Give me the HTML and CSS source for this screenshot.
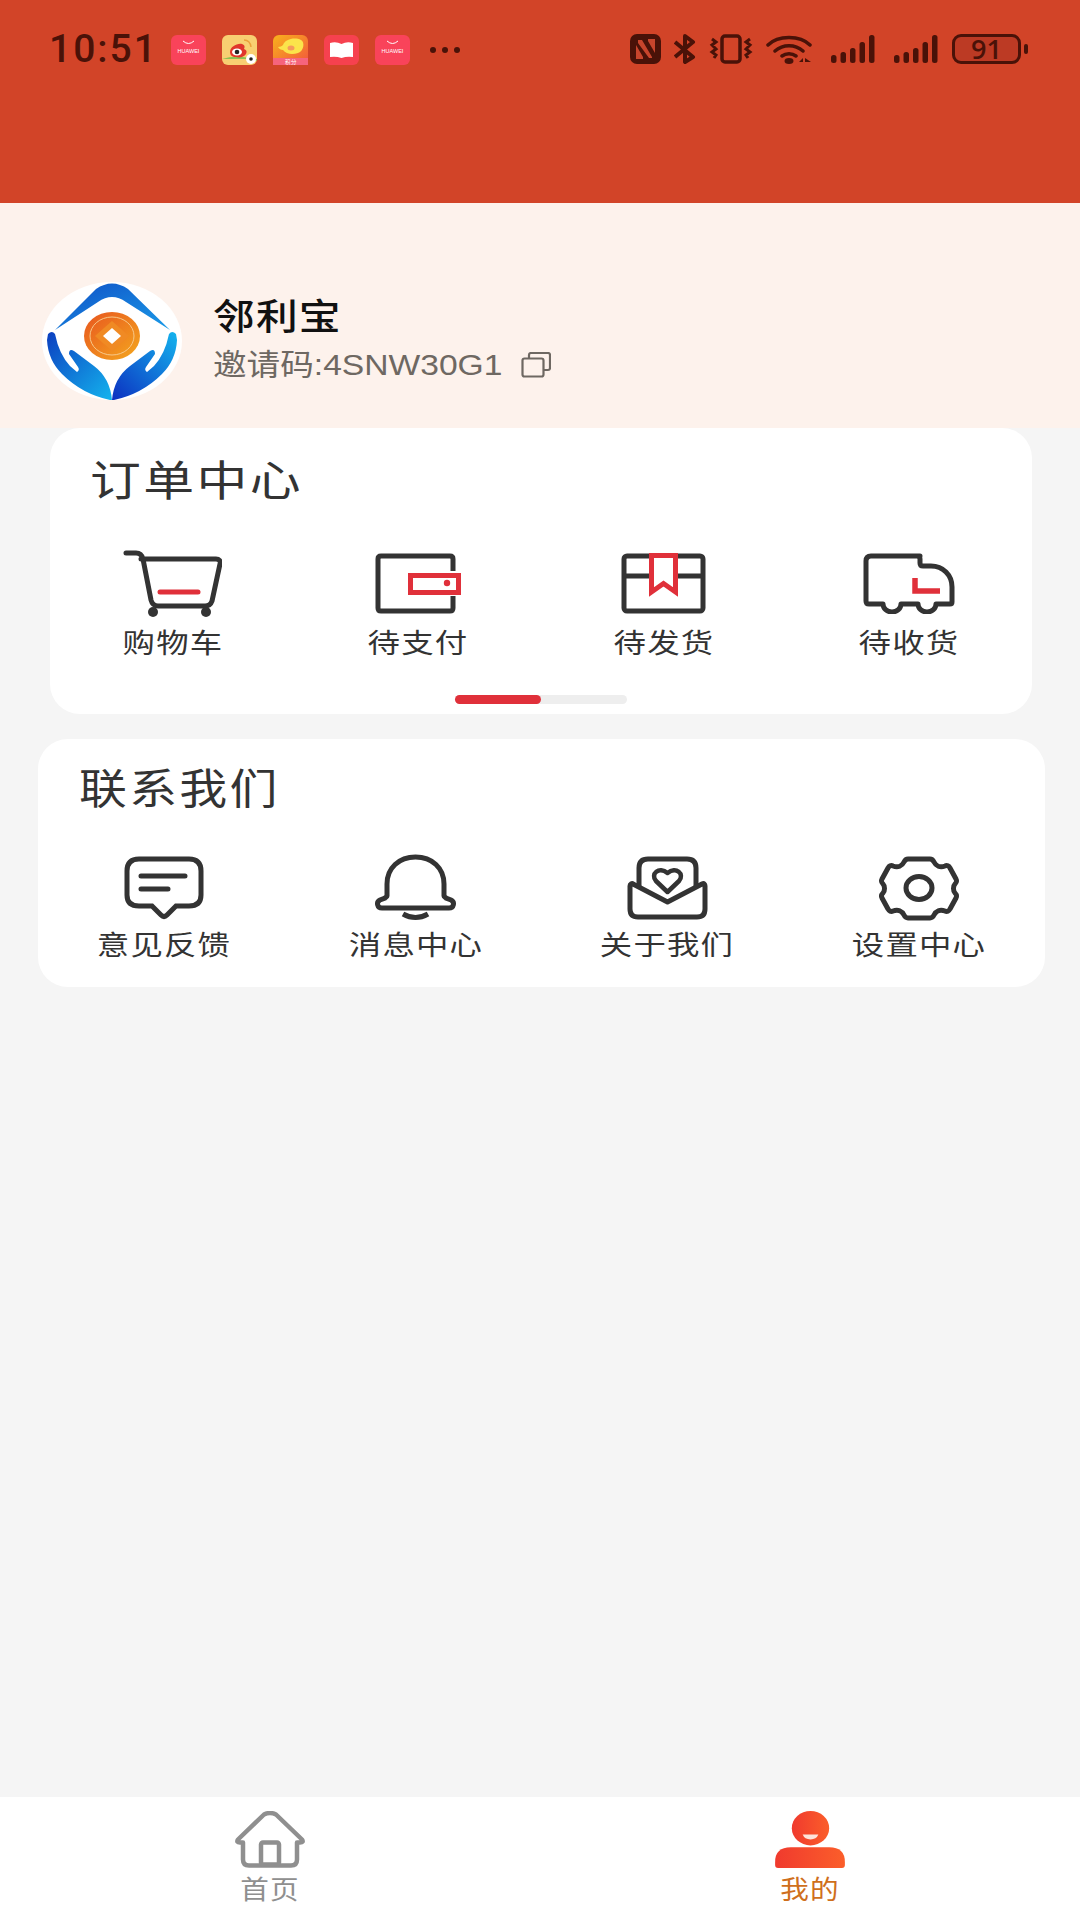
FILE: index.html
```html
<!DOCTYPE html>
<html lang="zh-CN">

<head>
  <meta charset="UTF-8" />
  <meta name="viewport" content="width=device-width, initial-scale=1.0" />
  <title>我的</title>
  <link rel="stylesheet" href="styles.css">
</head>

<body>
  <div class="page">
    <header class="status">
      <span class="clock">10:51</span>

      <div class="notify">
        <svg class="app" viewBox="0 0 35 30">
          <rect width="35" height="30" rx="6" fill="#f9435a" />
          <path d="M12 6q5.500 5 11 0" fill="none" stroke="#fff" stroke-width="1" />
          <text x="17.500" y="18" class="app-text">HUAWEI</text>
        </svg>
        <svg class="app" viewBox="0 0 35 30">
          <rect width="35" height="30" rx="6" fill="#f8cf72" />
          <path d="M0 24q17-6 35 2v-2H0z" fill="#8cc152" />
          <path d="M8 17c0-5 7-9 12-8 3 1 3 3 2 5 3 1 3 3 2 5-2 3-6 4-10 3-4 0-6-2-6-5z" fill="#e0352b" />
          <ellipse cx="15" cy="17" rx="5" ry="3.500" fill="#fff" />
          <circle cx="15" cy="17" r="2.300" fill="#222" />
          <path d="M22 5q6 0 7 7" fill="none" stroke="#eba13a" stroke-width="1.500" />
          <circle cx="29" cy="24" r="5" fill="#fff" />
          <circle cx="29" cy="24" r="1.800" fill="#222" />
        </svg>
        <svg class="app" viewBox="0 0 35 30">
          <defs>
            <linearGradient id="pigBg" x1="0" y1="0" x2="1" y2="1">
              <stop offset="0" stop-color="#f9b31c" />
              <stop offset="1" stop-color="#f2553c" />
            </linearGradient>
          </defs>
          <rect width="35" height="30" rx="6" fill="url(#pigBg)" />
          <path d="M10 10c2-6 12-8 18-5 4 2 3 11-3 13-6 2-12 1-15-3-2 0-4-1-5-3 2 0 4-1 5-2z" fill="#fbe44b" />
          <ellipse cx="18" cy="13" rx="3.500" ry="2.500" fill="#f59a5a" />
          <rect x="0" y="23" width="35" height="7" fill="#f6647c" />
          <text x="17.500" y="29" class="app-text">积分</text>
        </svg>
        <svg class="app" viewBox="0 0 35 30">
          <rect width="35" height="30" rx="6" fill="#f6414f" />
          <path d="M6 8q6-2 11.500 1Q23 6 29 8v14q-6-1-11.500 1Q12 21 6 22z" fill="#fff" />
        </svg>
        <svg class="app" viewBox="0 0 35 30">
          <rect width="35" height="30" rx="6" fill="#f9435a" />
          <path d="M12 6q5.500 5 11 0" fill="none" stroke="#fff" stroke-width="1" />
          <text x="17.500" y="18" class="app-text">HUAWEI</text>
        </svg>
        <div class="more"><i></i><i></i><i></i></div>
      </div>

      <div class="system">
        <svg class="sys nfc" viewBox="0 0 31 30">
          <rect width="31" height="30" rx="7" fill="#4a1208" />
          <path d="M8 6h4l10 17v1h-3L8 9zM6 11l7 12v2H6zM25 19l-7-12V5h7z" fill="#c8452c" />
        </svg>
        <svg class="sys bt" viewBox="0 0 22 30">
          <path d="M1 8l18 15-8 5V2l8 6L1 23" fill="none" stroke="#4a1208" stroke-width="4" stroke-linejoin="round" />
        </svg>
        <svg class="sys vib" viewBox="0 0 44 30">
          <rect x="13" y="2" width="18" height="26" rx="3" fill="none" stroke="#4a1208" stroke-width="3.500" />
          <path d="M3 5l4 3-4 3 4 4-4 3 4 3-2 3M41 5l-4 3 4 3-4 4 4 3-4 3 2 3" fill="none" stroke="#4a1208" stroke-width="3" />
        </svg>
        <svg class="sys wifi" viewBox="0 0 46 30">
          <path d="M2 11C12 1 34 1 44 11M9 17c8-7 20-7 28 0M16 22c4-3 10-3 14 0" fill="none" stroke="#4a1208" stroke-width="3.500" stroke-linecap="round" />
          <ellipse cx="23" cy="27" rx="4.500" ry="3" fill="#4a1208" />
          <path d="M33 28l4-4v4zM39 24l6 4h-6z" fill="#4a1208" />
        </svg>
        <svg class="sys signal" viewBox="0 0 44 30">
          <rect x="0" y="21" width="5.500" height="8" rx="2.500" />
          <rect x="9.500" y="18" width="5.500" height="11" rx="2.500" />
          <rect x="19" y="14" width="5.500" height="15" rx="2.500" />
          <rect x="28.500" y="8" width="5.500" height="21" rx="2.500" />
          <rect x="38" y="1" width="5.500" height="28" rx="2.500" />
        </svg>
        <svg class="sys signal" viewBox="0 0 44 30">
          <rect x="0" y="21" width="5.500" height="8" rx="2.500" />
          <rect x="9.500" y="18" width="5.500" height="11" rx="2.500" />
          <rect x="19" y="14" width="5.500" height="15" rx="2.500" />
          <rect x="28.500" y="8" width="5.500" height="21" rx="2.500" />
          <rect x="38" y="1" width="5.500" height="28" rx="2.500" />
        </svg>
        <div class="battery"><span class="level">91</span></div>
        <span class="nub"></span>
      </div>
    </header>

    <section class="profile">
      <svg class="logo" viewBox="0 0 140 118">
        <defs>
          <linearGradient id="roof" x1="0" y1="0" x2="1" y2="1">
            <stop offset="0" stop-color="#0f4fc6" />
            <stop offset="1" stop-color="#1a9be8" />
          </linearGradient>
          <linearGradient id="handL" x1="0" y1="0" x2="1" y2="1">
            <stop offset="0" stop-color="#0c3fc0" />
            <stop offset="1" stop-color="#14b4ee" />
          </linearGradient>
          <linearGradient id="handR" x1="1" y1="0" x2="0" y2="1">
            <stop offset="0" stop-color="#14b4ee" />
            <stop offset="1" stop-color="#0c2fc0" />
          </linearGradient>
          <linearGradient id="coin" x1="0" y1="0" x2="1" y2="1">
            <stop offset="0" stop-color="#e8551e" />
            <stop offset="1" stop-color="#f4a81f" />
          </linearGradient>
        </defs>
        <ellipse cx="70" cy="59" rx="70" ry="59" fill="#fff" />
        <path d="M13 48L54 7Q70-4 86 7l42 41L84 20Q70 10 56 20z" fill="url(#roof)" />
        <ellipse cx="70" cy="54" rx="28" ry="24" fill="url(#coin)" />
        <ellipse cx="70" cy="54" rx="22" ry="19" fill="none" stroke="#f7c98a" stroke-width="1" />
        <path d="M70 39l17 15-17 15-17-15z" fill="#f08a24" />
        <path d="M70 46l9 8-9 8-9-8z" fill="#fff" />
        <path d="M6 52q4-4 7 0 4 20 15 32l7 6q3-2 1-5l-9-13q0-6 5-3l20 15q16 12 18 34h-2q-28-6-48-26Q6 78 5 58z" fill="url(#handL)" />
        <path d="M134 52q-4-4-7 0-4 20-15 32l-7 6q-3-2-1-5l9-13q0-6-5-3L88 84q-16 12-18 34h2q28-6 48-26 14-14 15-34z" fill="url(#handR)" />
      </svg>
      <div class="profile-text">
        <div class="name">邻利宝</div>
        <div class="invite">
          <span class="invite-code">邀请码:4SNW30G1</span>
          <svg class="copy" viewBox="0 0 30 26">
            <path d="M8 6V3q0-2 2-2h17q2 0 2 2v13q0 2-2 2h-4" fill="none" stroke="#6e6862" stroke-width="2.200" />
            <rect x="1.500" y="6.500" width="21" height="18" rx="2" fill="none" stroke="#6e6862" stroke-width="2.200" />
          </svg>
        </div>
      </div>
    </section>

    <main class="content">
      <section class="card card-orders">
        <h2 class="card-title">订单中心</h2>
        <div class="grid">
          <div class="item">
            <div class="icon">
              <svg width="99" height="67" viewBox="0 0 99 67">
                <path d="M3 3h10c4 0 6 2 7 6l8 41c1 4 3 6 7 6h47c4 0 6-2 7-5l8-37c1-3-1-5-4-5H18" fill="none" stroke="#333" stroke-width="5" stroke-linecap="round" />
                <path d="M37 42h38" stroke="#e0303a" stroke-width="5" stroke-linecap="round" />
                <circle cx="30" cy="62" r="5" fill="#333" />
                <circle cx="83" cy="62" r="5" fill="#333" />
              </svg>
            </div>
            <span class="label">购物车</span>
          </div>
          <div class="item">
            <div class="icon">
              <svg width="86" height="61" viewBox="0 0 86 61">
                <path d="M78 18V6q0-3-3-3H6Q3 3 3 6v49q0 3 3 3h69q3 0 3-3V43" fill="none" stroke="#333" stroke-width="5" />
                <rect x="35.500" y="22.500" width="48" height="17" fill="none" stroke="#e0303a" stroke-width="5" />
                <circle cx="72" cy="30" r="3.200" fill="#e0303a" />
              </svg>
            </div>
            <span class="label">待支付</span>
          </div>
          <div class="item">
            <div class="icon">
              <svg width="85" height="61" viewBox="0 0 85 61">
                <rect x="3" y="3" width="79" height="55" rx="3" fill="none" stroke="#333" stroke-width="5" />
                <path d="M3 23h79" stroke="#333" stroke-width="5" />
                <path d="M30.500 2.500V39l12-8.500L54.500 39V2.500z" fill="#fff" stroke="#e0303a" stroke-width="5" />
              </svg>
            </div>
            <span class="label">待发货</span>
          </div>
          <div class="item">
            <div class="icon">
              <svg width="92" height="61" viewBox="0 0 92 61">
                <path d="M57 3H8Q3 3 3 8v40q0 3 3 3h14a9 8 0 0 0 18 0h17a9 8 0 0 0 18 0h14q2 0 2-2V34c0-12-9-21-21-21h-8q-3 0-3-3V6q0-3-3-3z" fill="none" stroke="#333" stroke-width="5" stroke-linejoin="round" />
                <path d="M52 25v13h25" fill="none" stroke="#e0303a" stroke-width="5.500" />
              </svg>
            </div>
            <span class="label">待收货</span>
          </div>
        </div>
        <div class="scroll-track"><div class="scroll-thumb"></div></div>
      </section>

      <section class="card card-contact">
        <h2 class="card-title">联系我们</h2>
        <div class="grid">
          <div class="item">
            <div class="icon">
              <svg width="80" height="64" viewBox="0 0 80 64">
                <path d="M15 3h50q12 0 12 12v24q0 11-12 11H52l-9 9q-3 3-6 0l-9-9H15Q3 50 3 39V15Q3 3 15 3z" fill="none" stroke="#333" stroke-width="5" />
                <path d="M17 20h44M17 33h27" stroke="#333" stroke-width="5" stroke-linecap="round" />
              </svg>
            </div>
            <span class="label">意见反馈</span>
          </div>
          <div class="item">
            <div class="icon">
              <svg width="81" height="68" viewBox="0 0 81 68">
                <path d="M12 42V30C12 14 24 3 40.500 3S69 14 69 30v12c0 1 1 1 2 2l5 2c4 2 3 8-2 8H7c-5 0-6-6-2-8l5-2c1-1 2-1 2-2z" fill="none" stroke="#333" stroke-width="5" />
                <path d="M28 60q12.500 7 25 0" fill="none" stroke="#333" stroke-width="5" />
              </svg>
            </div>
            <span class="label">消息中心</span>
          </div>
          <div class="item">
            <div class="icon">
              <svg width="81" height="64" viewBox="0 0 81 64">
                <path d="M3 30c0-2 2-3 3-2l34.500 18L75 28c2-1 3 0 3 2v23q0 8-8 8H11q-8 0-8-8z" fill="none" stroke="#333" stroke-width="5" stroke-linejoin="round" />
                <path d="M12 31V12q0-9 9-9h39q9 0 9 9v19" fill="none" stroke="#333" stroke-width="5" />
                <path d="M40.500 36L29 25c-6-7 3-15 11.500-8 8.500-7 17.500 1 11.500 8z" fill="none" stroke="#333" stroke-width="4.500" stroke-linejoin="round" />
              </svg>
            </div>
            <span class="label">关于我们</span>
          </div>
          <div class="item">
            <div class="icon">
              <svg width="82" height="66" viewBox="0 0 82 66">
                <path d="M30 4h22c2 0 3 1 4 3 2 4 6 6 11 4 2-1 4 0 5 2l6 11c1 2 1 3-1 5-2 2-2 7 0 9 2 2 2 3 1 5l-6 11c-1 2-3 3-5 2-5-2-9 0-11 4-1 2-2 3-4 3H30c-2 0-3-1-4-3-2-4-6-6-11-4-2 1-4 0-5-2L4 43c-1-2-1-3 1-5 2-2 2-7 0-9-2-2-2-3-1-5l6-11c1-2 3-3 5-2 5 2 9 0 11-4 1-2 2-3 4-3z" fill="none" stroke="#333" stroke-width="5" stroke-linejoin="round" />
                <ellipse cx="41" cy="33" rx="13" ry="11.500" fill="none" stroke="#333" stroke-width="5" />
              </svg>
            </div>
            <span class="label">设置中心</span>
          </div>
        </div>
      </section>
    </main>

    <nav class="tabbar">
      <div class="tab">
        <svg class="tab-icon" viewBox="0 0 70 56">
          <path d="M29 3q6-3 12 0l26 25q2 3-2 3h-3v17q0 6-6 6H14q-6 0-6-6V31H5q-4 0-2-3z" fill="none" stroke="#8f8f8f" stroke-width="4.500" stroke-linejoin="round" />
          <rect x="26" y="31" width="18" height="22" rx="2" fill="none" stroke="#8f8f8f" stroke-width="4.500" />
        </svg>
        <span class="tab-label">首页</span>
      </div>
      <div class="tab tab-active">
        <svg class="tab-icon" viewBox="0 0 71 58">
          <defs>
            <linearGradient id="me" x1="0" y1="0" x2="1" y2="0">
              <stop offset="0" stop-color="#f03a2e" />
              <stop offset="1" stop-color="#fb5e2a" />
            </linearGradient>
          </defs>
          <ellipse cx="36" cy="17.500" rx="19" ry="17.500" fill="url(#me)" />
          <path d="M28 24h16q-2 5-8 5t-8-5z" fill="#fde3da" />
          <path d="M16 37h39q16 0 16 15v3q0 3-3 3H3q-3 0-3-3v-3q0-15 16-15z" fill="url(#me)" />
        </svg>
        <span class="tab-label">我的</span>
      </div>
    </nav>
  </div>
</body>

</html>
```

FILE: styles.css
```css
:root {
  --text-dark: #333333;
  --status-dark: #4a1208;
  --brand-red: #e0303a;
}

body {
  margin: 0;
  font-family: "Noto Sans CJK SC", "Noto Sans", sans-serif;
  color: var(--text-dark);
  background-color: #f5f5f5;
}

.page {
  display: flex;
  flex-direction: column;
  width: 1080px;
  height: 1920px;
  overflow: hidden;
}

/* status bar */
.status {
  display: flex;
  align-items: flex-start;
  height: 203px;
  padding-top: 35px;
  box-sizing: border-box;
  background-color: #d24428;
  color: var(--status-dark);
}

.clock {
  width: 108px;
  margin-left: 49px;
  font-family: "Roboto", sans-serif;
  font-size: 39px;
  font-weight: 500;
  line-height: 28px;
  letter-spacing: 2px;
  white-space: nowrap;
}

.notify {
  display: flex;
  align-items: center;
  gap: 16px;
  margin-left: 14px;
}

.app {
  width: 35px;
  height: 30px;
}

.app-text {
  font-family: "Liberation Sans", sans-serif;
  font-size: 5.500px;
  fill: #ffffff;
  text-anchor: middle;
}

.more {
  display: flex;
  gap: 6px;
  margin-left: 4px;
}

.more i {
  width: 6px;
  height: 6px;
  border-radius: 50%;
  background-color: var(--status-dark);
}

.system {
  display: flex;
  align-items: center;
  margin-left: 170px;
  margin-top: -1px;
}

.sys {
  height: 30px;
  fill: var(--status-dark);
}

.nfc { width: 31px; }
.bt { width: 22px; margin-left: 13px; }
.vib { width: 44px; margin-left: 13px; }
.wifi { width: 46px; margin-left: 13px; }
.signal { width: 44px; margin-left: 19px; }

.battery {
  width: 69px;
  height: 30px;
  margin-left: 14px;
  box-sizing: border-box;
  border: 3px solid var(--status-dark);
  border-radius: 9px;
  background-color: #bc3a24;
  font-family: "Open Sans", sans-serif;
  font-size: 27px;
  font-weight: 600;
  line-height: 24px;
  text-align: center;
}

.nub {
  width: 4px;
  height: 10px;
  margin-left: 3px;
  border-radius: 2px;
  background-color: var(--status-dark);
}

/* profile */
.profile {
  display: flex;
  align-items: center;
  height: 225px;
  padding: 51px 0 0 42px;
  box-sizing: border-box;
  background-color: #fdf2ec;
}

.logo {
  width: 140px;
  height: 118px;
  flex-shrink: 0;
}

.profile-text {
  margin-left: 31px;
  margin-bottom: 6px;
}

/* the reference text is wider than the font, so it gets pulled out sideways */
.name {
  font-size: 36px;
  font-weight: 500;
  line-height: 50px;
  letter-spacing: 1px;
  color: #111111;
  transform: scaleX(1.16);
  transform-origin: left center;
}

.invite {
  display: flex;
  align-items: center;
  margin-top: 4px;
  font-size: 30px;
  line-height: 44px;
  color: #6e6862;
}

.invite-code {
  font-family: "Liberation Sans", "Noto Sans CJK SC", sans-serif;
  transform: scaleX(1.12);
  transform-origin: left center;
  white-space: nowrap;
}

.copy {
  width: 30px;
  height: 26px;
  margin-left: 50px;
}

/* cards */
.content {
  flex: 1;
}

.card {
  box-sizing: border-box;
  border-radius: 30px;
  background-color: #ffffff;
}

.card-orders {
  height: 286px;
  margin: 0 48px 25px 50px;
  padding-top: 18px;
}

.card-contact {
  height: 248px;
  margin: 0 35px 0 38px;
  padding-top: 15px;
}

.card-title {
  margin: 0 0 0 40px;
  font-size: 42px;
  font-weight: 400;
  line-height: 64px;
  letter-spacing: 2px;
  transform: scaleX(1.21);
  transform-origin: left center;
}

.card-contact .card-title {
  margin-left: 41px;
  transform: scaleX(1.14);
}

.grid {
  display: grid;
  grid-template-columns: repeat(4, 1fr);
  margin-top: 39px;
}

.card-contact .grid {
  margin-top: 36px;
}

.item {
  display: flex;
  flex-direction: column;
  align-items: center;
}

.icon {
  display: flex;
  align-items: center;
  justify-content: center;
  height: 68px;
}

.label {
  margin-top: 3px;
  font-size: 27px;
  line-height: 44px;
  letter-spacing: 1px;
  white-space: nowrap;
  transform: scaleX(1.2);
}

.card-contact .label {
  margin-top: 0;
}

.scroll-track {
  width: 172px;
  height: 9px;
  margin: 31px auto 0;
  border-radius: 5px;
  background-color: #eeeeee;
}

.scroll-thumb {
  width: 86px;
  height: 9px;
  border-radius: 5px;
  background-color: var(--brand-red);
}

/* bottom tabs */
.tabbar {
  display: grid;
  grid-template-columns: 1fr 1fr;
  height: 123px;
  box-sizing: border-box;
  padding-top: 14px;
  background-color: #ffffff;
}

.tab {
  display: flex;
  flex-direction: column;
  align-items: center;
  color: #8f8f8f;
}

.tab-icon {
  width: 70px;
  height: 57px;
}

.tab-label {
  margin-top: 2px;
  font-size: 26px;
  line-height: 36px;
  letter-spacing: 1px;
  transform: scaleX(1.1);
}

.tab-active {
  color: #cf6f1c;
}
```
